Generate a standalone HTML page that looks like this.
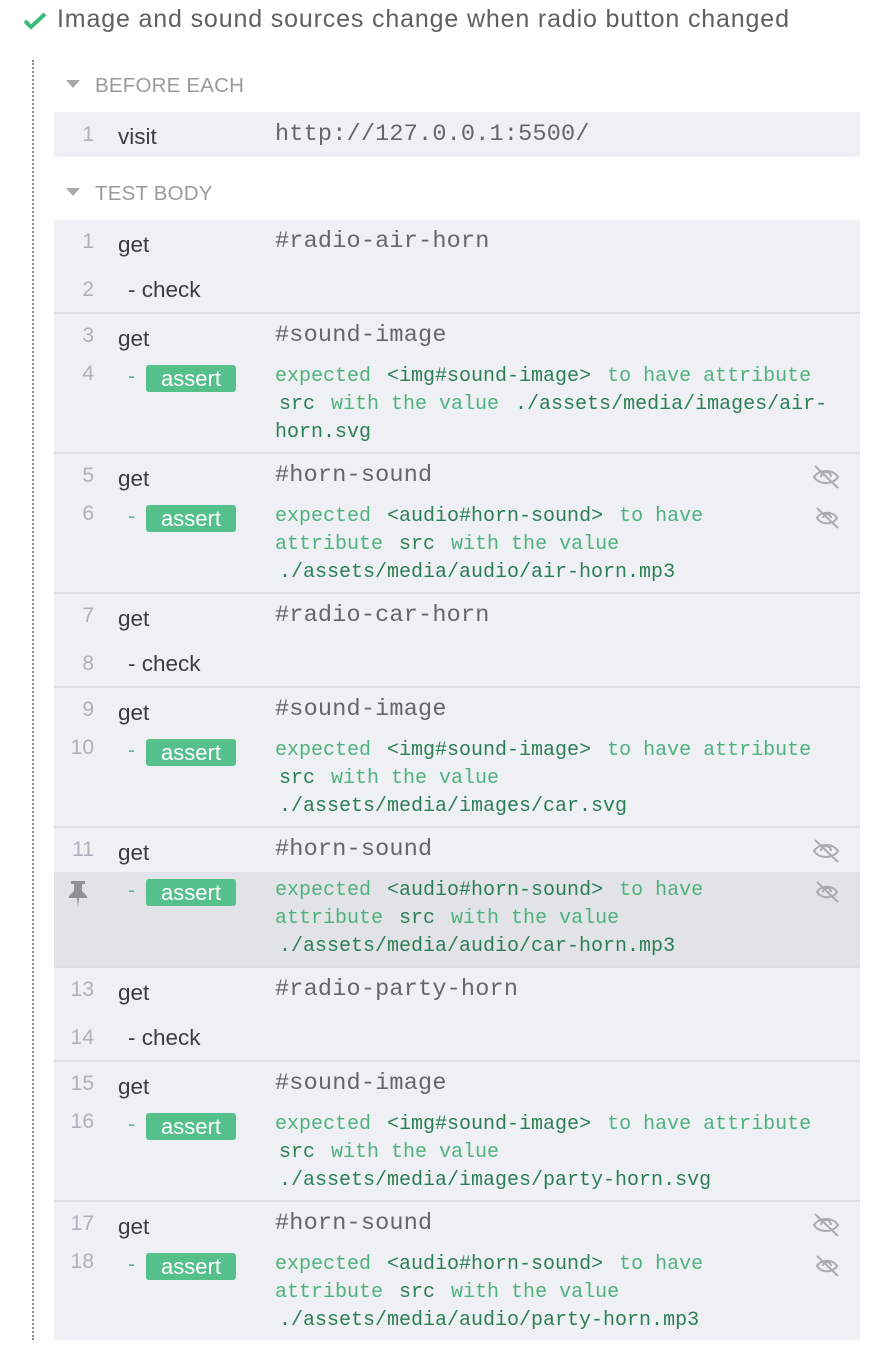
<!DOCTYPE html>
<html><head><meta charset="utf-8"><style>
*{margin:0;padding:0;box-sizing:border-box}
body{width:894px;height:1362px;background:#fff;font-family:"Liberation Sans","DejaVu Sans",sans-serif;position:relative;overflow:hidden}
.title{position:absolute;left:57px;top:5px;font-size:25px;letter-spacing:0.85px;color:#5f5f5f;line-height:28px;white-space:nowrap}
.chk{position:absolute;left:23px;top:11px}
.dots{position:absolute;left:32px;top:60px;height:1280px;border-left:2px dotted #8a8a8a}
.hdr{position:absolute;left:66px;font-size:20.5px;color:#9a9a9a;line-height:24px;letter-spacing:0.2px}
.hdr i{display:inline-block;width:0;height:0;border-left:7px solid transparent;border-right:7px solid transparent;border-top:8px solid #aaa;margin-right:15px;vertical-align:4px}
.box{position:absolute;left:54px;width:806px;background:#eef0f3}
.sep{border-top:2px solid #dcdfe2}
.row{position:relative;line-height:28px}
.g{height:44px;padding-top:8px}
.c{height:48px;padding-top:12px}
.a{padding:5px 0}
.num{position:absolute;left:0;width:40px;text-align:right;color:#aeb0bd;font-size:21px}
.cmd{position:absolute;left:64px;color:#3c3c3c;font-size:22.5px;top:2px}
.g .num{top:8px}.g .cmd{top:11px}
.c .num{top:12px}.c .cmd{top:12px;left:74px}
.a .num{top:2px}
.arg{margin-left:221px;font-family:"Liberation Mono",monospace;font-size:23.5px;color:#666;letter-spacing:0.2px}
.dash{position:absolute;left:74px;top:5px;color:#5ac18e;font-size:21px}
.badge{position:absolute;left:92px;top:7px;width:90px;height:27px;line-height:27px;background:#56c08d;color:#fff;border-radius:3px;text-align:center;font-size:22px}
.msg{margin-left:221px;font-family:"Liberation Mono",monospace;font-size:20px;color:#4fb27e;white-space:pre;line-height:28px}
.msg b{font-weight:normal;color:#2c7e55;padding:0 4px}
.pin{background:#e1e3e6}
.eye{position:absolute;left:757px}
</style></head><body>
<svg class="chk" width="24" height="20" viewBox="0 0 24 20"><path d="M2 10l6 6L22 3" fill="none" stroke="#3cb97b" stroke-width="4"/></svg>
<div class="title">Image and sound sources change when radio button changed</div>
<div class="dots"></div>
<div class="hdr" style="top:74px"><i></i>BEFORE EACH</div>
<div class="box" style="top:112px;height:45px"><div class="row" style="padding-top:9px"><span class="num" style="top:9px">1</span><span class="cmd" style="top:11px">visit</span><div class="arg">http://127.0.0.1:5500/</div></div></div>
<div class="hdr" style="top:182px"><i></i>TEST BODY</div>

<div class="box" style="top:220px">
<div class="row g"><span class="num">1</span><span class="cmd">get</span><div class="arg">#radio-air-horn</div></div>
<div class="row c"><span class="num">2</span><span class="cmd">- check</span></div>
</div>

<div class="box sep" style="top:312px">
<div class="row g"><span class="num">3</span><span class="cmd">get</span><div class="arg">#sound-image</div></div>
<div class="row a"><span class="num">4</span><span class="dash">-</span><span class="badge">assert</span><div class="msg">expected <b>&lt;img#sound-image&gt;</b> to have attribute
<b>src</b> with the value <b>./assets/media/images/air-</b>
<b style="padding:0">horn.svg</b></div></div>
</div>

<div class="box sep" style="top:452px">
<div class="row g"><span class="num">5</span><span class="cmd">get</span><div class="arg">#horn-sound</div>
<svg class="eye" style="top:10px" width="30" height="26" viewBox="0 0 30 26"><path d="M3 13c5-8 19-8 24 0c-5 8-19 8-24 0z M10 13a5 5 0 0 1 10 0" fill="none" stroke="#a9abad" stroke-width="2"/><path d="M4 2l23 22" stroke="#a9abad" stroke-width="2"/></svg></div>
<div class="row a"><span class="num">6</span><span class="dash">-</span><span class="badge">assert</span><div class="msg">expected <b>&lt;audio#horn-sound&gt;</b> to have
attribute <b>src</b> with the value
<b>./assets/media/audio/air-horn.mp3</b></div>
<svg class="eye" style="top:8px;left:760px" width="26" height="24" viewBox="0 0 26 24"><path d="M3 12c4-7 16-7 20 0c-4 7-16 7-20 0z M9 12a4 4 0 0 1 8 0" fill="none" stroke="#a9abad" stroke-width="2"/><path d="M3 2l21 20" stroke="#a9abad" stroke-width="2"/></svg></div>
</div>

<div class="box sep" style="top:592px">
<div class="row g"><span class="num">7</span><span class="cmd">get</span><div class="arg">#radio-car-horn</div></div>
<div class="row c"><span class="num">8</span><span class="cmd">- check</span></div>
</div>

<div class="box sep" style="top:686px">
<div class="row g"><span class="num">9</span><span class="cmd">get</span><div class="arg">#sound-image</div></div>
<div class="row a"><span class="num">10</span><span class="dash">-</span><span class="badge">assert</span><div class="msg">expected <b>&lt;img#sound-image&gt;</b> to have attribute
<b>src</b> with the value
<b>./assets/media/images/car.svg</b></div></div>
</div>

<div class="box sep" style="top:826px">
<div class="row g"><span class="num">11</span><span class="cmd">get</span><div class="arg">#horn-sound</div>
<svg class="eye" style="top:10px" width="30" height="26" viewBox="0 0 30 26"><path d="M3 13c5-8 19-8 24 0c-5 8-19 8-24 0z M10 13a5 5 0 0 1 10 0" fill="none" stroke="#a9abad" stroke-width="2"/><path d="M4 2l23 22" stroke="#a9abad" stroke-width="2"/></svg></div>
<div class="row a pin"><svg style="position:absolute;left:12px;top:8px" width="24" height="28" viewBox="0 0 24 28"><path d="M5 1h14v3h-3v7l5 5v2H3v-2l5-5V4H5z M11 18h2l-1 9z" fill="#8f9194"/></svg><span class="dash">-</span><span class="badge">assert</span><div class="msg">expected <b>&lt;audio#horn-sound&gt;</b> to have
attribute <b>src</b> with the value
<b>./assets/media/audio/car-horn.mp3</b></div>
<svg class="eye" style="top:8px;left:760px" width="26" height="24" viewBox="0 0 26 24"><path d="M3 12c4-7 16-7 20 0c-4 7-16 7-20 0z M9 12a4 4 0 0 1 8 0" fill="none" stroke="#a9abad" stroke-width="2"/><path d="M3 2l21 20" stroke="#a9abad" stroke-width="2"/></svg></div>
</div>

<div class="box sep" style="top:966px">
<div class="row g"><span class="num">13</span><span class="cmd">get</span><div class="arg">#radio-party-horn</div></div>
<div class="row c"><span class="num">14</span><span class="cmd">- check</span></div>
</div>

<div class="box sep" style="top:1060px">
<div class="row g"><span class="num">15</span><span class="cmd">get</span><div class="arg">#sound-image</div></div>
<div class="row a"><span class="num">16</span><span class="dash">-</span><span class="badge">assert</span><div class="msg">expected <b>&lt;img#sound-image&gt;</b> to have attribute
<b>src</b> with the value
<b>./assets/media/images/party-horn.svg</b></div></div>
</div>

<div class="box sep" style="top:1200px">
<div class="row g"><span class="num">17</span><span class="cmd">get</span><div class="arg">#horn-sound</div>
<svg class="eye" style="top:10px" width="30" height="26" viewBox="0 0 30 26"><path d="M3 13c5-8 19-8 24 0c-5 8-19 8-24 0z M10 13a5 5 0 0 1 10 0" fill="none" stroke="#a9abad" stroke-width="2"/><path d="M4 2l23 22" stroke="#a9abad" stroke-width="2"/></svg></div>
<div class="row a"><span class="num">18</span><span class="dash">-</span><span class="badge">assert</span><div class="msg">expected <b>&lt;audio#horn-sound&gt;</b> to have
attribute <b>src</b> with the value
<b>./assets/media/audio/party-horn.mp3</b></div>
<svg class="eye" style="top:8px;left:760px" width="26" height="24" viewBox="0 0 26 24"><path d="M3 12c4-7 16-7 20 0c-4 7-16 7-20 0z M9 12a4 4 0 0 1 8 0" fill="none" stroke="#a9abad" stroke-width="2"/><path d="M3 2l21 20" stroke="#a9abad" stroke-width="2"/></svg></div>
</div>
</body></html>
